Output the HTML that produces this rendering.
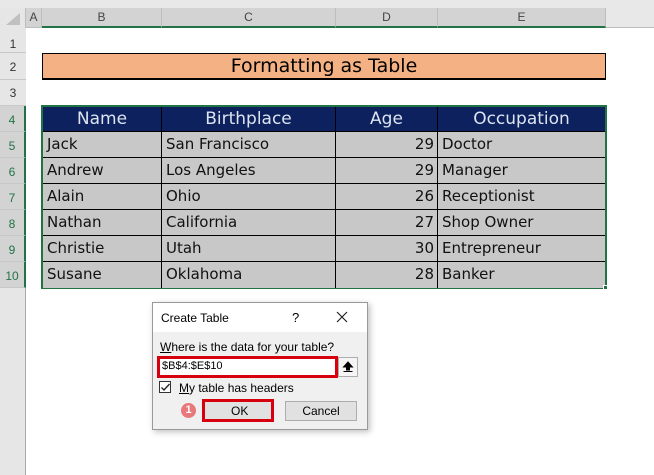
<!DOCTYPE html>
<html><head><style>
body{margin:0;width:654px;height:475px;background:#fff;position:relative;overflow:hidden;font-family:"Liberation Sans",sans-serif}
.a{position:absolute;box-sizing:border-box}
.ch{top:8px;height:20px;background:#d3d3d3;border-right:1px solid #bdbdbd;border-bottom:2px solid #217346;font-size:12px;color:#444;text-align:center;line-height:18px}
.rh{left:0;width:26px;background:#e6e6e6;border-bottom:1px solid #c8c8c8;font-size:12px;color:#333;text-align:center}
.c{box-sizing:border-box;font-family:"DejaVu Sans",sans-serif;font-size:15px;color:#111;background:#c8c8c8;border-right:1.5px solid #000;border-bottom:1.5px solid #000;padding-left:4px;white-space:nowrap;line-height:24px;height:26px}
.h{background:#0c215e;color:#dde4f0;font-size:17px;text-align:center;padding:0;border-color:#000}
.r{text-align:right;padding-right:3px}
.d{font-family:"Liberation Sans",sans-serif;font-size:12px;color:#000}
</style></head><body>
<div class="a" style="left:0;top:0;width:654px;height:8px;background:#e8e8e8"></div>
<div class="a" style="left:0;top:8px;width:26px;height:20px;background:#e6e6e6;border-right:1px solid #bdbdbd"></div>
<div class="a" style="left:6px;top:13px;width:0;height:0;border-left:14px solid transparent;border-bottom:12px solid #c0c0c0"></div>
<div class="a ch" style="left:26px;width:16px;border-bottom:1px solid #bdbdbd">A</div>
<div class="a ch" style="left:42px;width:120px">B</div>
<div class="a ch" style="left:162px;width:174px">C</div>
<div class="a ch" style="left:336px;width:102px">D</div>
<div class="a ch" style="left:438px;width:168px">E</div>
<div class="a" style="left:606px;top:8px;width:48px;height:20px;background:#e8e8e8;border-bottom:1px solid #bdbdbd"></div>
<div class="a" style="left:0;top:28px;width:26px;height:447px;background:#e6e6e6;border-right:1px solid #aaa"></div>
<div class="a rh" style="top:28px;height:25px;line-height:32px">1</div>
<div class="a rh" style="top:53px;height:27px;line-height:28px">2</div>
<div class="a rh" style="top:80px;height:26px;line-height:26px">3</div>
<div class="a rh" style="top:106px;height:26px;line-height:28px;background:#d3d3d3;color:#217346;border-right:2px solid #217346">4</div>
<div class="a rh" style="top:132px;height:26px;line-height:28px;background:#d3d3d3;color:#217346;border-right:2px solid #217346">5</div>
<div class="a rh" style="top:158px;height:26px;line-height:28px;background:#d3d3d3;color:#217346;border-right:2px solid #217346">6</div>
<div class="a rh" style="top:184px;height:26px;line-height:28px;background:#d3d3d3;color:#217346;border-right:2px solid #217346">7</div>
<div class="a rh" style="top:210px;height:26px;line-height:28px;background:#d3d3d3;color:#217346;border-right:2px solid #217346">8</div>
<div class="a rh" style="top:236px;height:26px;line-height:28px;background:#d3d3d3;color:#217346;border-right:2px solid #217346">9</div>
<div class="a rh" style="top:262px;height:26px;line-height:28px;background:#d3d3d3;color:#217346;border-right:2px solid #217346">10</div>

<div class="a" style="left:42px;top:53px;width:564px;height:27px;background:#f4b183;border:1.5px solid #000;border-bottom:2.5px solid #000;font-family:'DejaVu Sans',sans-serif;font-size:19px;text-align:center;line-height:24px">Formatting as Table</div>

<div class="a" style="left:41px;top:105px;width:566px;height:184px;border:2px solid #217346"></div>
<div class="a" style="left:43px;top:107px;width:562px">
<div style="display:flex"><div class="c h" style="width:119px;height:25px">Name</div><div class="c h" style="width:174px;height:25px">Birthplace</div><div class="c h" style="width:102px;height:25px">Age</div><div class="c h" style="width:167px;height:25px;border-right:0">Occupation</div></div>
<div style="display:flex"><div class="c" style="width:119px">Jack</div><div class="c" style="width:174px">San Francisco</div><div class="c r" style="width:102px">29</div><div class="c" style="width:167px;border-right:0">Doctor</div></div>
<div style="display:flex"><div class="c" style="width:119px">Andrew</div><div class="c" style="width:174px">Los Angeles</div><div class="c r" style="width:102px">29</div><div class="c" style="width:167px;border-right:0">Manager</div></div>
<div style="display:flex"><div class="c" style="width:119px">Alain</div><div class="c" style="width:174px">Ohio</div><div class="c r" style="width:102px">26</div><div class="c" style="width:167px;border-right:0">Receptionist</div></div>
<div style="display:flex"><div class="c" style="width:119px">Nathan</div><div class="c" style="width:174px">California</div><div class="c r" style="width:102px">27</div><div class="c" style="width:167px;border-right:0">Shop Owner</div></div>
<div style="display:flex"><div class="c" style="width:119px">Christie</div><div class="c" style="width:174px">Utah</div><div class="c r" style="width:102px">30</div><div class="c" style="width:167px;border-right:0">Entrepreneur</div></div>
<div style="display:flex"><div class="c" style="width:119px;border-bottom:0">Susane</div><div class="c" style="width:174px;border-bottom:0">Oklahoma</div><div class="c r" style="width:102px;border-bottom:0">28</div><div class="c" style="width:167px;border:0">Banker</div></div>
</div>
<div class="a" style="left:603px;top:285px;width:5px;height:5px;background:#217346;border:1px solid #fff"></div>

<div class="a" style="left:152px;top:302px;width:216px;height:128px;background:#f0f0f0;border:1px solid #999;box-shadow:2px 2px 6px rgba(0,0,0,.25)"></div>
<div class="a" style="left:153px;top:303px;width:214px;height:29px;background:#fff"></div>
<div class="a d" style="left:161px;top:311px">Create Table</div>
<div class="a d" style="left:292px;top:310px;font-size:13px">?</div>
<svg class="a" style="left:336px;top:311px" width="12" height="12"><path d="M1 1L11 11M11 1L1 11" stroke="#222" stroke-width="1.2"/></svg>
<div class="a d" style="left:160px;top:340px"><u>W</u>here is the data for your table?</div>
<div class="a" style="left:157px;top:356px;width:181px;height:22px;background:#fff;border:3px solid #d7000f"></div>
<div class="a d" style="left:162px;top:360px;font-size:11px">$B$4:$E$10</div>
<div class="a" style="left:338px;top:357px;width:20px;height:20px;background:#f5f5f5;border:1px solid #adadad"></div>
<svg class="a" style="left:342px;top:361px" width="12" height="12"><path d="M6 1L1.5 6H4.5V9H7.5V6H10.5Z M1.5 10.5H10.5" fill="#000" stroke="#000" stroke-width="1"/></svg>
<div class="a" style="left:159px;top:381px;width:12px;height:12px;background:#fff;border:1px solid #333"></div>
<svg class="a" style="left:160px;top:382px" width="11" height="11"><path d="M1.5 5.5L4 8L9.5 2" fill="none" stroke="#222" stroke-width="1.3"/></svg>
<div class="a d" style="left:179px;top:381px"><u>M</u>y table has headers</div>
<div class="a" style="left:181px;top:403px;width:15px;height:15px;border-radius:50%;background:#e8787a;color:#fff;font-size:11px;font-weight:bold;text-align:center;line-height:15px">1</div>
<div class="a" style="left:202px;top:399px;width:72px;height:23px;background:#e1e1e1;border:3px solid #d7000f"></div>
<div class="a d" style="left:231px;top:404px">OK</div>
<div class="a" style="left:285px;top:401px;width:72px;height:20px;background:#e1e1e1;border:1px solid #adadad;text-align:center;line-height:18px;font-size:12px">Cancel</div>
</body></html>
